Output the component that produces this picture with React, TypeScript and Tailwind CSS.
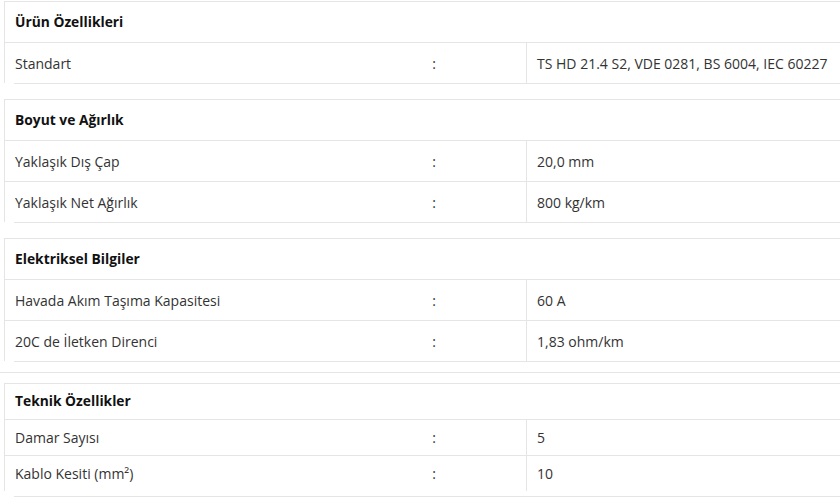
interface Row {
	label: React.ReactNode;
	value: string;
}

interface Section {
	title: string;
	rows: Row[];
	compact?: boolean;
}

const sections: Section[] = [
	{
		title: "Ürün Özellikleri",
		rows: [{ label: "Standart", value: "TS HD 21.4 S2, VDE 0281, BS 6004, IEC 60227" }],
	},
	{
		title: "Boyut ve Ağırlık",
		rows: [
			{ label: "Yaklaşık Dış Çap", value: "20,0 mm" },
			{ label: "Yaklaşık Net Ağırlık", value: "800 kg/km" },
		],
	},
	{
		title: "Elektriksel Bilgiler",
		rows: [
			{ label: "Havada Akım Taşıma Kapasitesi", value: "60 A" },
			{ label: "20C de İletken Direnci", value: "1,83 ohm/km" },
		],
	},
];

const teknik: Section = {
	title: "Teknik Özellikler",
	compact: true,
	rows: [
		{ label: "Damar Sayısı", value: "5" },
		{ label: "Kablo Kesiti (mm²)", value: "10" },
	],
};

const SpecTable: React.FC<{ section: Section }> = ({ section }) => {
	const h = section.compact ? "h-[36px]" : "h-[41px]";
	return (
		<div>
			<div className="ml-[4px] border-l border-[#e5e5e5]">
				{/* Header */}
				<div className={`${h} border-t border-[#e5e5e5] flex items-center pl-[10px] font-bold text-[13.8px] text-[#111]`}>
					{section.title}
				</div>
				{section.rows.map((row, i) => (
					<div key={i} className={`${h} border-t border-[#e5e5e5] flex`}>
						<div className="w-[337px] flex items-center pl-[10px]">{row.label}</div>
						<div className="w-[184px] flex items-center justify-center">:</div>
						<div className="flex-1 flex items-center pl-[10px] border-l border-[#e5e5e5]">
							{row.value}
						</div>
					</div>
				))}
			</div>
			<div className={`ml-[14px] border-t border-[#e5e5e5] ${section.compact ? "mt-[5px]" : ""}`} />
		</div>
	);
};

export default function App() {
	return (
		<div
			className="bg-white w-[840px] h-[497px] overflow-hidden pt-px text-[14px] text-[#333]"
			style={{ fontFamily: '"Open Sans", Arial, sans-serif' }}
		>
			<div className="flex flex-col gap-[15px]">
				{sections.map((s) => (
					<SpecTable key={s.title} section={s} />
				))}
			</div>
			<div className="mt-[10px] border-t border-[#e5e5e5]" />
			<div className="mt-[10px]">
				<SpecTable section={teknik} />
			</div>
		</div>
	);
}
